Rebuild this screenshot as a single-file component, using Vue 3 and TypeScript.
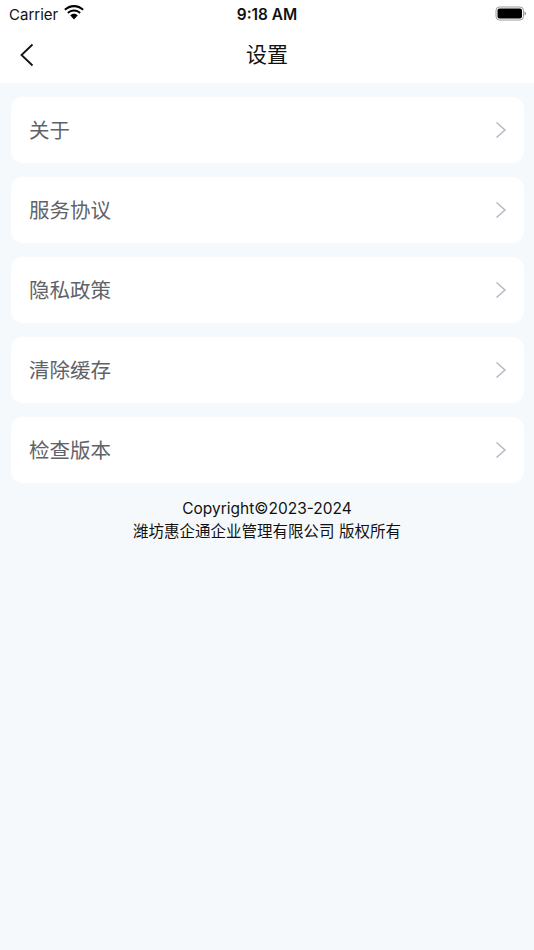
<script setup lang="ts">
const items: string[] = ['关于', '服务协议', '隐私政策', '清除缓存', '检查版本']
</script>

<template>
  <div class="page">
    <header class="top">
      <div class="status">
        <div class="status-left">
          <span class="carrier">Carrier</span>
          <svg class="wifi" width="20" height="15" viewBox="0 0 20 15">
            <path d="M10 2.200c3.300 0 6.300 1.300 8.500 3.400l1.300-1.500C17.300 1.600 13.800 0 10 0S2.700 1.600 .2 4.100l1.300 1.500C3.700 3.500 6.700 2.200 10 2.200z" fill="#000"/>
            <path d="M10 6.600c2.100 0 4 .8 5.400 2.100l1.400-1.500C15 5.500 12.600 4.400 10 4.400S5 5.500 3.200 7.200l1.400 1.500C6 7.400 7.900 6.600 10 6.600z" fill="#000"/>
            <path d="M10 8.800c-1.500 0-2.800.6-3.800 1.500L10 14.400l3.800-4.100c-1-.9-2.300-1.500-3.800-1.500z" fill="#000"/>
          </svg>
        </div>
        <span class="time">9:18 AM</span>
        <svg class="battery" width="32" height="15" viewBox="0 0 32 15">
          <rect x="1" y="1" width="27.500" height="13" rx="3.500" fill="none" stroke="#9a9a9a" stroke-width="1"/>
          <rect x="2.500" y="2.500" width="24.500" height="10" rx="2" fill="#000"/>
          <path d="M29.500 5.500c1 .3 1.500 1 1.500 2s-.5 1.700-1.500 2z" fill="#9a9a9a"/>
        </svg>
      </div>
      <div class="nav">
        <svg class="back" width="16" height="24" viewBox="0 0 16 24">
          <path d="M13.500 1.500 2.500 12l11 10.500" fill="none" stroke="#111" stroke-width="1.800"/>
        </svg>
        <h1 class="title">设置</h1>
      </div>
    </header>
    <main class="content">
      <ul class="list">
        <li v-for="item in items" :key="item" class="row">
          <span class="label">{{ item }}</span>
          <svg class="chevron" width="12" height="18" viewBox="0 0 12 18">
            <path d="M1.500 1.500 10 9l-8.500 7.500" fill="none" stroke="#b3b8c6" stroke-width="1.500"/>
          </svg>
        </li>
      </ul>
      <footer class="copyright">
        <p>Copyright©2023-2024</p>
        <p>潍坊惠企通企业管理有限公司 版权所有</p>
      </footer>
    </main>
  </div>
</template>

<style>
html, body { margin: 0; padding: 0; }
</style>

<style scoped>
.page {
  width: 534px;
  height: 950px;
  overflow: hidden;
  display: flex;
  flex-direction: column;
  background: #f6f9fc;
  font-family: Inter, "Noto Sans CJK SC", sans-serif;
}
.top { background: #fff; height: 83px; flex: none; }
.status {
  height: 28px;
  padding: 0 7px 0 9px;
  display: flex;
  align-items: center;
  justify-content: space-between;
  position: relative;
}
.status-left { display: flex; align-items: center; gap: 6px; }
.carrier { font-size: 15px; color: #111; }
.wifi { margin-top: -4px; }
.battery { margin-top: -2px; }
.time {
  position: absolute;
  left: 0;
  right: 0;
  text-align: center;
  font-size: 15.400px;
  font-weight: 600;
  color: #111;
}
.nav {
  height: 55px;
  padding-bottom: 6px;
  box-sizing: border-box;
  position: relative;
  display: flex;
  align-items: center;
  justify-content: center;
}
.back { position: absolute; left: 19px; top: 15px; }
.title { margin: 0; font-size: 21px; font-weight: 400; color: #111; }
.content { padding: 14px 10.500px 0; }
.list {
  list-style: none;
  margin: 0;
  padding: 0;
  display: flex;
  flex-direction: column;
  gap: 14px;
}
.row {
  height: 66px;
  box-sizing: border-box;
  background: #fff;
  border-radius: 12px;
  padding: 0 17px 3px 18.500px;
  display: flex;
  align-items: center;
  justify-content: space-between;
}
.label { font-size: 20.500px; color: #5f6369; }
.chevron { margin-top: 3px; }
.copyright {
  margin-top: 14px;
  text-align: center;
  font-size: 15.500px;
  line-height: 23px;
  color: #111;
}
.copyright p { margin: 0; }
</style>
